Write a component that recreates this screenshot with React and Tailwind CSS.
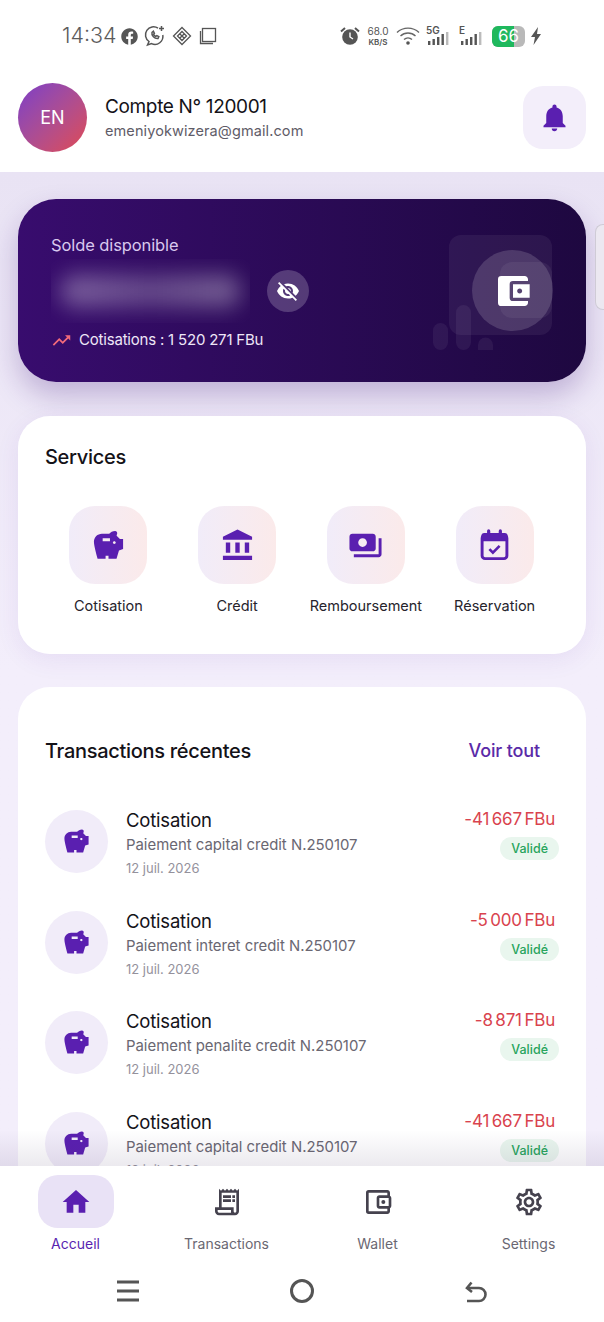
import React from 'react';
import { FaFacebook } from 'react-icons/fa';
import {
  MdAccountBalance,
  MdAccountBalanceWallet,
  MdHome,
  MdNotifications,
  MdOutlineAccountBalanceWallet,
  MdOutlineReceiptLong,
  MdOutlineSettings,
  MdPayments,
  MdSavings,
  MdTrendingUp,
  MdVisibilityOff,
} from 'react-icons/md';

const CalendarCheck = ({ className }) => (
  <svg viewBox="0 0 24 24" fill="none" stroke="currentColor" className={className}>
    <rect x="3.5" y="5" width="17" height="16" rx="2" strokeWidth="2" />
    <path d="M3 5.5a2 2 0 0 1 2-2h14a2 2 0 0 1 2 2V9H3z" fill="currentColor" stroke="none" />
    <path d="M8 2v3M16 2v3" strokeWidth="2.2" strokeLinecap="round" />
    <path d="m8.5 14.5 2.4 2.4 4.6-4.6" strokeWidth="1.8" />
  </svg>
);

const services = [
  { label: 'Cotisation', Icon: MdSavings },
  { label: 'Crédit', Icon: MdAccountBalance },
  { label: 'Remboursement', Icon: MdPayments },
  { label: 'Réservation', Icon: CalendarCheck },
];

const transactions = [
  { detail: 'Paiement capital credit N.250107', amount: '-41 667 FBu' },
  { detail: 'Paiement interet credit N.250107', amount: '-5 000 FBu' },
  { detail: 'Paiement penalite credit N.250107', amount: '-8 871 FBu' },
  { detail: 'Paiement capital credit N.250107', amount: '-41 667 FBu' },
];

const navItems = [
  { label: 'Accueil', Icon: MdHome, active: true },
  { label: 'Transactions', Icon: MdOutlineReceiptLong },
  { label: 'Wallet', Icon: MdOutlineAccountBalanceWallet },
  { label: 'Settings', Icon: MdOutlineSettings },
];

const Signal = ({ label }) => (
  <div className="relative h-[20px] w-[25px]">
    <span className="absolute left-0 top-[-2px] text-[10px] font-semibold leading-[12px] text-[#555]">{label}</span>
    <svg width="25" height="20" viewBox="0 0 25 20" className="absolute inset-0">
      <rect x="2" y="15" width="2.4" height="4" fill="#555" />
      <rect x="6.5" y="13" width="2.4" height="6" fill="#555" />
      <rect x="11" y="11" width="2.4" height="8" fill="#555" />
      <rect x="15.5" y="8" width="2.4" height="11" fill="#555" />
      <rect x="20" y="6" width="2.4" height="13" fill="#bbb" />
    </svg>
  </div>
);

const StatusBar = () => (
  <div className="flex h-[72px] items-center justify-between px-[62px] text-[#555]">
    <div className="flex items-center">
      <span className="w-[59px] text-[21.5px] leading-none font-light text-[#5c5c5c]">14:34</span>
      <FaFacebook className="text-[17px] text-[#555]" />
      <svg width="22" height="22" viewBox="0 0 22 22" fill="none" stroke="#555" strokeWidth="1.5" className="ml-[6px]">
        <path d="M14 3.2A8 8 0 1 0 5 16.5L3.5 20l4-1.4A8 8 0 0 0 18.8 10" />
        <path d="M8 7.5c-.8 3 2.5 6.5 6 6l.8-1.8-2-1-1 .8c-1-.4-1.8-1.2-2.2-2.2l.8-1-1-2z" />
        <path d="M17.5 1v5M15 3.5h5" />
      </svg>
      <svg width="20" height="20" viewBox="0 0 20 20" fill="none" stroke="#555" strokeWidth="1.3" className="ml-[6px]">
        <path d="M10 1.5 18.5 10 10 18.5 1.5 10z" />
        <path d="M10 5.5 14.5 10 10 14.5 5.5 10zM7.7 7.7l4.6 4.6M12.3 7.7l-4.6 4.6" />
      </svg>
      <svg width="20" height="20" viewBox="0 0 20 20" fill="none" stroke="#555" strokeWidth="1.3" className="ml-[6px]">
        <rect x="4.5" y="2.5" width="13" height="13" />
        <path d="M2.5 5v12.5H15" />
      </svg>
    </div>
    <div className="flex items-center">
      <svg width="20" height="20" viewBox="0 0 20 20">
        <circle cx="10" cy="11" r="7.8" fill="#555" />
        <path d="M10 6.5V11l3 2" fill="none" stroke="#fff" strokeWidth="1.4" />
        <path d="M1 5.5 5 2M19 5.5 15 2" stroke="#555" strokeWidth="2" />
      </svg>
      <div className="ml-[6px] flex w-[24px] flex-col items-center text-[#555]">
        <span className="text-[10px] leading-[12px]">68.0</span>
        <span className="text-[8px] font-semibold leading-[10px]">KB/S</span>
      </div>
      <svg width="24" height="20" viewBox="0 0 24 20" fill="none" stroke="#666" strokeWidth="1.4" className="ml-[6px]">
        <path d="M1 6.5a16 16 0 0 1 22 0M4.5 10a11 11 0 0 1 15 0M8 13.5a6 6 0 0 1 8 0" />
        <circle cx="12" cy="17" r="1.8" fill="#555" stroke="none" />
      </svg>
      <div className="ml-[6px]"><Signal label="5G" /></div>
      <div className="ml-[8px]"><Signal label="E" /></div>
      <div className="relative ml-[8px] flex h-[21px] w-[33px] items-center overflow-hidden rounded-[6px] bg-[#b9b9b9]">
        <div className="h-full w-[22px] bg-[#1fb85d]" />
        <span className="absolute inset-0 flex items-center justify-center text-[17px] leading-none text-white">66</span>
      </div>
      <svg width="12" height="20" viewBox="0 0 12 20" fill="#555" className="ml-[5px]">
        <path d="M8 1 1 11h4l-1.5 8L11 8H7z" />
      </svg>
    </div>
  </div>
);

const Header = () => (
  <div className="flex h-[100px] items-center justify-between pl-[18px] pr-[18px] pb-[10px]">
    <div className="flex items-center gap-[18px]">
      <div className="flex h-[69px] w-[69px] items-center justify-center rounded-full bg-gradient-to-br from-[#7d3ac8] to-[#e0474f] text-[18px] text-white">
        EN
      </div>
      <div>
        <p className="text-[19px] leading-[26px] tracking-[-0.35px] text-[#141218]">Compte N° 120001</p>
        <p className="mt-[1px] text-[14.5px] leading-[20px] tracking-[0.1px] text-[#5f5c68]">emeniyokwizera@gmail.com</p>
      </div>
    </div>
    <div className="flex h-[63px] w-[63px] items-center justify-center rounded-[20px] bg-[#f3eefa]">
      <MdNotifications className="text-[33px] text-[#5a1fb0]" />
    </div>
  </div>
);

const BalanceCard = () => (
  <div className="relative h-[183px] overflow-hidden rounded-[38px] bg-gradient-to-r from-[#380c6e] to-[#1e0840] px-[33px] pt-[35px]">
    <p className="text-[16.5px] leading-[22px] tracking-[-0.1px] text-[#d9c8ee]">Solde disponible</p>
    <div className="mt-[3px] flex items-center">
      <div className="h-[64px] w-[199px] overflow-hidden">
        <div className="mx-[10px] mt-[16px] h-[32px] rounded-[14px] bg-gradient-to-r from-white/35 via-white/25 to-white/35 blur-[11px]" />
      </div>
      <div className="ml-[17px] flex h-[42px] w-[42px] items-center justify-center rounded-full bg-white/20">
        <MdVisibilityOff className="text-[24px] text-white" />
      </div>
    </div>
    <div className="mt-[6px] flex items-center gap-[7px]">
      <MdTrendingUp className="text-[21px] text-[#f0697a]" />
      <span className="text-[15px] leading-[22px] tracking-[-0.2px] text-[#eee6f7]">Cotisations : 1 520 271 FBu</span>
    </div>
    {/* decoration behind the wallet */}
    <svg width="140" height="130" viewBox="0 0 140 130" className="absolute left-[415px] top-[36px]">
      <rect x="16" y="0" width="103" height="100" rx="12" fill="#fff" fillOpacity="0.06" />
      <rect x="67" y="27" width="52" height="56" rx="12" fill="#fff" fillOpacity="0.06" />
      <rect x="0" y="88" width="15" height="27" rx="7.5" fill="#fff" fillOpacity="0.06" />
      <rect x="23" y="70" width="15" height="45" rx="7.5" fill="#fff" fillOpacity="0.06" />
      <path d="M45 115v-5a7.5 7.5 0 0 1 15 0v5z" fill="#fff" fillOpacity="0.06" />
    </svg>
    <div className="absolute left-[454px] top-[51px] flex h-[81px] w-[81px] items-center justify-center rounded-full bg-white/15">
      <MdAccountBalanceWallet className="text-[40px] text-white" />
    </div>
  </div>
);

const Services = () => (
  <div className="h-[238px] rounded-[32px] bg-white px-[27px] pt-[27px]">
    <h2 className="text-[20px] font-medium leading-[28px] tracking-[-0.3px] text-[#141218]">Services</h2>
    <div className="mt-[35px] grid grid-cols-4 gap-[20px] pl-[9px] pr-[10px]">
      {services.map(({ label, Icon }) => (
        <div key={label} className="flex flex-col items-center">
          <div className="flex h-[78px] w-[78px] items-center justify-center rounded-[26px] bg-gradient-to-r from-[#f1ecf9] to-[#fbeaea]">
            <Icon className="h-[35px] w-[35px] text-[#5a1fb0]" />
          </div>
          <span className="mt-[12px] whitespace-nowrap text-[14.5px] leading-[20px] text-[#26232c]">{label}</span>
        </div>
      ))}
    </div>
  </div>
);

const TransactionRow = ({ detail, amount }) => (
  <div className="flex h-[100.5px] items-start">
    <div className="mt-[10px] flex h-[63px] w-[63px] shrink-0 items-center justify-center rounded-full bg-[#f1ecf9]">
      <MdSavings className="text-[29px] text-[#5a1fb0]" />
    </div>
    <div className="ml-[18px] flex-1">
      <p className="mt-[8px] text-[18.5px] leading-[25px] tracking-[-0.2px] text-[#141218]">Cotisation</p>
      <p className="text-[14.9px] leading-[25px] text-[#6a6772]">{detail}</p>
      <p className="text-[13px] leading-[21px] text-[#94919c]">12 juil. 2026</p>
    </div>
    <div className="flex flex-col items-end">
      <span className="mt-[6px] pr-[4px] text-[17px] leading-[26px] tracking-[-0.2px] [word-spacing:-2px] text-[#d9434e]">{amount}</span>
      <span className="mt-[5px] rounded-full bg-[#e9f6ee] px-[11px] py-[2px] text-[12.5px] font-medium leading-[19px] text-[#27a45c]">
        Validé
      </span>
    </div>
  </div>
);

const Transactions = () => (
  <div className="h-[600px] rounded-t-[32px] bg-white px-[27px] pt-[50px]">
    <div className="flex items-center justify-between pr-[19px]">
      <h2 className="text-[20px] font-medium leading-[28px] tracking-[-0.3px] text-[#141218]">Transactions récentes</h2>
      <span className="text-[18px] font-medium leading-[28px] tracking-[-0.15px] text-[#5a2aa8]">Voir tout</span>
    </div>
    <div className="mt-[35px]">
      {transactions.map((t, i) => (
        <TransactionRow key={i} detail={t.detail} amount={t.amount} />
      ))}
    </div>
  </div>
);

const BottomNav = () => (
  <div className="relative z-10 grid h-[99px] shrink-0 grid-cols-4 bg-white pt-[9px]">
    {navItems.map(({ label, Icon, active }) => (
      <div key={label} className="flex flex-col items-center">
        <div className={`flex h-[53px] w-[76px] items-center justify-center rounded-[20px] ${active ? 'bg-[#e9e2f6]' : ''}`}>
          <Icon className={`text-[32px] ${active ? 'text-[#5a1fb0]' : 'text-[#45424e]'}`} />
        </div>
        <span className={`mt-[6px] text-[14px] leading-[20px] ${active ? 'text-[#5a1fb0]' : 'text-[#6a6772]'}`}>{label}</span>
      </div>
    ))}
  </div>
);

const SystemNav = () => (
  <div className="flex h-[57px] shrink-0 items-start justify-between bg-white px-[116px] pt-[14px]">
    <svg width="24" height="24" viewBox="0 0 24 24" stroke="#555" strokeWidth="3">
      <path d="M1 3h22M1 12h22M1 21h22" />
    </svg>
    <svg width="24" height="24" viewBox="0 0 24 24" fill="none" stroke="#555" strokeWidth="3">
      <circle cx="12" cy="12" r="10.5" />
    </svg>
    <svg width="24" height="24" viewBox="0 0 24 24" fill="none" stroke="#555" strokeWidth="2.6">
      <path d="M3 22h12a6.5 6.5 0 0 0 0-13H3" />
      <path d="M7.5 3.5 3 9l5 4" />
    </svg>
  </div>
);

export default function App() {
  return (
    <div className="flex h-[1322px] w-[604px] flex-col overflow-hidden bg-white font-['Inter','Liberation_Sans',sans-serif]">
      <div className="relative z-10 shrink-0 bg-white">
        <StatusBar />
        <Header />
      </div>
      <main className="relative flex-1 overflow-hidden bg-gradient-to-b from-[#e9e3f4] via-[#f3eefb] to-[#f3eefb] px-[18px] pt-[27px]">
        <div className="rounded-[38px] shadow-[0_14px_28px_rgba(60,20,120,0.25)]">
          <BalanceCard />
        </div>
        <div className="mt-[34px] rounded-[32px] shadow-[0_6px_24px_rgba(90,40,170,0.08)]">
          <Services />
        </div>
        <div className="mt-[33px]">
          <Transactions />
        </div>
        {/* side handle and fade over the scrolling content */}
        <div className="absolute right-0 top-[52px] h-[86px] w-[9px] rounded-l-[8px] border border-r-0 border-[#cfcbd6] bg-[#ece8f1]" />
        <div className="absolute inset-x-0 bottom-0 h-[36px] bg-gradient-to-b from-transparent to-[#3c2a5a]/10" />
      </main>
      <BottomNav />
      <SystemNav />
    </div>
  );
}
